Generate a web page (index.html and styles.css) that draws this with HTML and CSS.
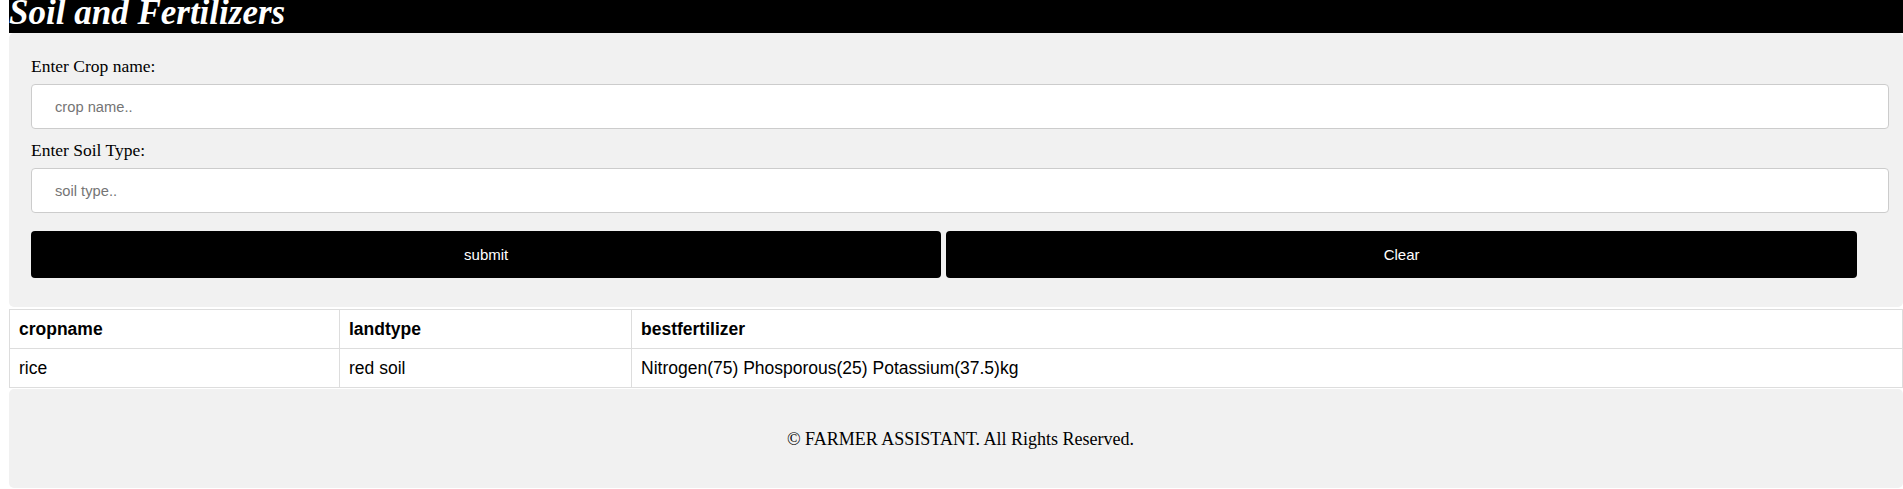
FILE: index.html
```html
<!DOCTYPE html>
<html lang="en">
<head>
<meta charset="utf-8">
<title>Soil and Fertilizers</title>
<link rel="stylesheet" href="styles.css">
</head>
<body>
<header class="topbar">
  <h1 class="title">Soil and Fertilizers</h1>
</header>
<div class="panel">
  <form class="form">
    <label class="label" for="crop">Enter Crop name:</label>
    <input class="field" id="crop" type="text" placeholder="crop name..">
    <label class="label" for="soil">Enter Soil Type:</label>
    <input class="field" id="soil" type="text" placeholder="soil type..">
    <div class="actions">
      <button class="btn" type="button">submit</button>
      <button class="btn" type="button">Clear</button>
    </div>
  </form>
</div>
<table class="results">
  <colgroup>
    <col class="col-crop">
    <col class="col-land">
    <col>
  </colgroup>
  <thead>
    <tr><th>cropname</th><th>landtype</th><th>bestfertilizer</th></tr>
  </thead>
  <tbody>
    <tr><td>rice</td><td>red soil</td><td>Nitrogen(75) Phosporous(25) Potassium(37.5)kg</td></tr>
  </tbody>
</table>
<footer class="footer">
  <p class="footer-text">&copy; FARMER ASSISTANT. All Rights Reserved.</p>
</footer>
</body>
</html>
```
FILE: styles.css
```css
html, body {
  overflow: hidden;
}
body {
  margin: 0;
  padding-left: 9px;
  font-family: "Liberation Serif", "Times New Roman", serif;
  font-size: 16px;
  color: #000;
  background: #fff;
}
.topbar {
  background: #000;
  height: 33px;
}
.title {
  margin: 0;
  font-size: 35px;
  line-height: 25px;
  font-style: italic;
  font-weight: bold;
  color: #fff;
}
.panel {
  background: #f1f1f1;
  border-radius: 5px;
  padding: 24px 14px 29px 22px;
}
.form {
  display: flex;
  flex-direction: column;
}
.label {
  display: block;
  font-size: 17.5px;
  line-height: 18px;
  margin-bottom: 9px;
}
.field {
  width: 100%;
  height: 45px;
  box-sizing: border-box;
  padding: 0 23px;
  border: 1px solid #ccc;
  border-radius: 4px;
  background: #fff;
  font-family: "Liberation Sans", Arial, sans-serif;
  font-size: 14.7px;
  margin: 0 0 12px 0;
}
.field::placeholder {
  color: #757575;
}
.actions {
  display: flex;
  gap: 5px;
  margin-top: 6px;
}
.btn {
  width: 49%;
  height: 47px;
  border: none;
  border-radius: 4px;
  background: #000;
  color: #fff;
  font-family: "Liberation Sans", Arial, sans-serif;
  font-size: 15px;
  padding: 0;
}
.results {
  width: 1894px;
  margin-top: 2px;
  border-collapse: collapse;
  table-layout: fixed;
  font-family: "Liberation Sans", Arial, sans-serif;
  font-size: 17.5px;
  background: #fff;
}
.col-crop { width: 330px; }
.col-land { width: 292px; }
.results th,
.results td {
  border: 1px solid #ddd;
  padding: 10px 9px;
  line-height: 18px;
  text-align: left;
}
.results th {
  font-weight: bold;
}
.footer {
  margin-top: 1px;
  height: 99px;
  background: #f1f1f1;
  border-radius: 5px;
  display: flex;
  align-items: center;
  justify-content: center;
  padding-left: 9px;
}
.footer-text {
  margin: 0;
  font-size: 18px;
  line-height: 18px;
}
```
